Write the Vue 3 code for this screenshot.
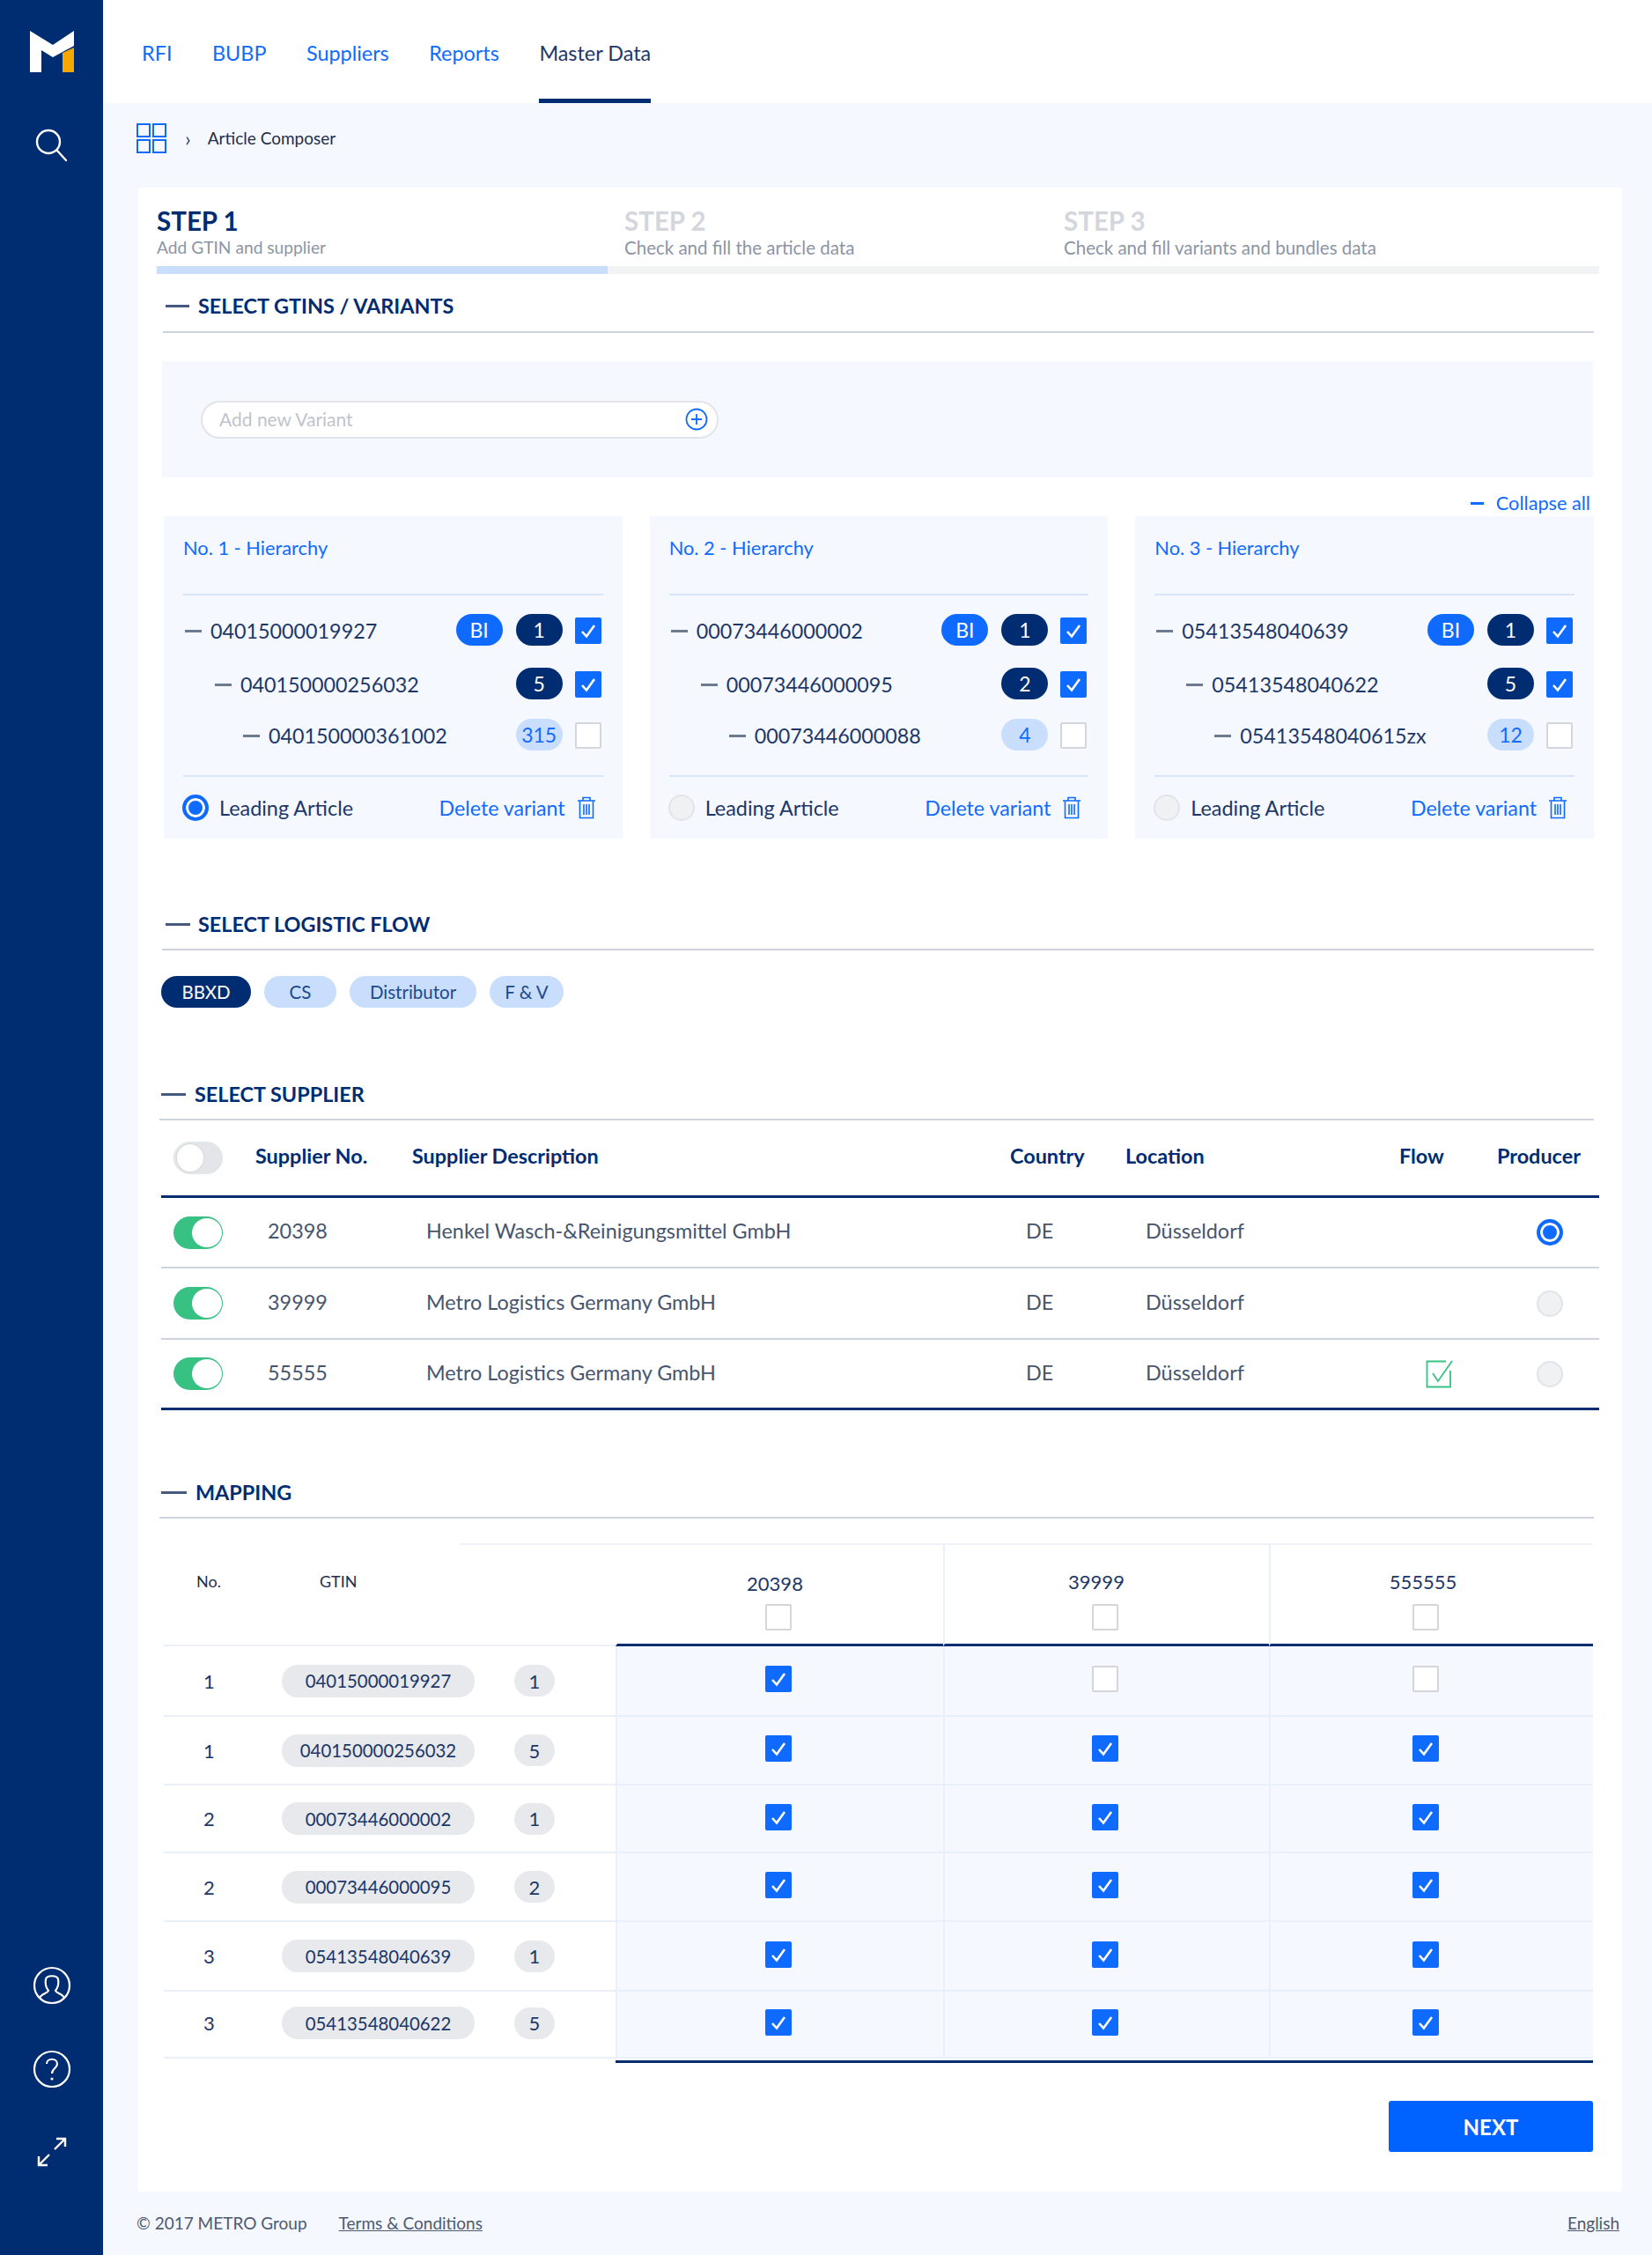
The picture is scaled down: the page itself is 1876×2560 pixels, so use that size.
<script setup>
const cards = [
  { no: 1, rows: [['04015000019927','1','d'],['040150000256032','5','d'],['040150000361002','315','l']], leading: true },
  { no: 2, rows: [['00073446000002','1','d'],['00073446000095','2','d'],['00073446000088','4','l']], leading: false },
  { no: 3, rows: [['05413548040639','1','d'],['05413548040622','5','d'],['05413548040615zx','12','l']], leading: false }
]
const nav = ['RFI', 'BUBP', 'Suppliers', 'Reports', 'Master Data']
const pills = ['BBXD', 'CS', 'Distributor', 'F & V']
const suppliers = [
  { no: '20398', name: 'Henkel Wasch-&Reinigungsmittel GmbH', flow: false, producer: true },
  { no: '39999', name: 'Metro Logistics Germany GmbH', flow: false, producer: false },
  { no: '55555', name: 'Metro Logistics Germany GmbH', flow: true, producer: false }
]
const mapHead = ['20398', '39999', '555555']
const mapRows = [
  { no: 1, gtin: '04015000019927', n: 1, c: [true, false, false] },
  { no: 1, gtin: '040150000256032', n: 5, c: [true, true, true] },
  { no: 2, gtin: '00073446000002', n: 1, c: [true, true, true] },
  { no: 2, gtin: '00073446000095', n: 2, c: [true, true, true] },
  { no: 3, gtin: '05413548040639', n: 1, c: [true, true, true] },
  { no: 3, gtin: '05413548040622', n: 5, c: [true, true, true] }
]
</script>

<template>
  <div class="shell">
    <aside class="side">
      <svg class="logo" viewBox="0 0 50 47" width="50" height="47">
        <path d="M0 0 L26 16 L50 0 V17 L37 24 L26 30 L13 22 V47 H0 Z" fill="#fff" />
        <path d="M37 25 L50 19 V47 H37 Z" fill="#f5a800" />
      </svg>
      <svg class="ic-search" viewBox="0 0 40 40" width="40" height="40" fill="none" stroke="#fff" stroke-width="2.4">
        <circle cx="17" cy="17" r="13" />
        <path d="M26.500 26.500 L37 38" stroke-linecap="round" />
      </svg>
      <div class="side-fill"></div>
      <svg class="ic-user" viewBox="0 0 44 44" width="44" height="44" fill="none" stroke="#fff" stroke-width="2.2">
        <circle cx="22" cy="22" r="20" />
        <path d="M8 36 C10 31 17 31 18 28 C15 24 14 20 15 15 C16 10 28 10 29 15 C30 20 29 24 26 28 C27 31 34 31 36 36" />
      </svg>
      <svg class="ic-help" viewBox="0 0 44 44" width="44" height="44" fill="none" stroke="#fff" stroke-width="2.2">
        <circle cx="22" cy="22" r="20" />
        <path d="M16 16 C16 9 28 9 28 16 C28 21 22 21 22 27" />
        <circle cx="22" cy="33" r="1.600" fill="#fff" stroke="none" />
      </svg>
      <svg class="ic-exp" viewBox="0 0 36 34" width="36" height="34" fill="none" stroke="#fff" stroke-width="2.400">
        <path d="M21 14 L33 2 M23 2 H33 V11" />
        <path d="M15 20 L3 32 M3 22 V32 H13" />
      </svg>
    </aside>

    <div class="main">
      <header class="top">
        <a v-for="n in nav" :key="n" class="nav" :class="{ on: n === 'Master Data' }">{{ n }}</a>
      </header>

      <div class="crumb">
        <svg class="ic-grid" viewBox="0 0 34 34" width="34" height="34" fill="none" stroke="#0f6bff" stroke-width="2">
          <rect x="1" y="1" width="14" height="14" />
          <rect x="19" y="1" width="14" height="14" />
          <rect x="1" y="19" width="14" height="14" />
          <rect x="19" y="19" width="14" height="14" />
        </svg>
        <span class="chev">›</span>
        <span class="crumb-t">Article Composer</span>
      </div>

      <section class="card">
        <div class="steps">
          <div class="step s1"><div class="st-t">STEP 1</div><div class="st-s">Add GTIN and supplier</div></div>
          <div class="step s2"><div class="st-t">STEP 2</div><div class="st-s">Check and fill the article data</div></div>
          <div class="step s3"><div class="st-t">STEP 3</div><div class="st-s">Check and fill variants and bundles data</div></div>
        </div>

        <div class="head h-gtin"><i class="dash"></i>SELECT GTINS / VARIANTS</div>

        <div class="addpanel">
          <div class="addinput">
            <span>Add new Variant</span>
            <svg viewBox="0 0 26 26" width="26" height="26" fill="none" stroke="#0f6bff" stroke-width="1.800">
              <circle cx="13" cy="13" r="11.500" />
              <path d="M13 7 V19 M7 13 H19" />
            </svg>
          </div>
        </div>

        <div class="collapse"><i></i>Collapse all</div>

        <div class="vcards">
          <div v-for="c in cards" :key="c.no" class="vcard">
            <div class="v-title">No. {{ c.no }} - Hierarchy</div>
            <div class="v-list">
              <div v-for="(r, i) in c.rows" :key="r[0]" class="v-row" :class="'lv' + i">
                <i class="vdash"></i>
                <span class="v-code">{{ r[0] }}</span>
                <span class="v-right">
                  <b v-if="i === 0" class="bdg bi">BI</b>
                  <b class="bdg" :class="r[2] === 'd' ? 'dk' : 'lt'">{{ r[1] }}</b>
                  <span class="chk" :class="{ off: r[2] === 'l' }">
                    <svg v-if="r[2] === 'd'" viewBox="0 0 30 30" width="30" height="30" fill="none" stroke="#fff" stroke-width="2.600"><path d="M8 16 L13 21.500 L22 9" /></svg>
                  </span>
                </span>
              </div>
            </div>
            <div class="v-foot">
              <span class="radio" :class="{ sel: c.leading }"></span>
              <span class="lead">Leading Article</span>
              <span class="del">Delete variant</span>
              <svg class="trash" viewBox="0 0 22 26" width="22" height="26" fill="none" stroke="#0f6bff" stroke-width="1.600">
                <path d="M1 5 H21 M7 5 V1.500 H15 V5 M3.500 5 V24.500 H18.500 V5 M8 9 V21 M11 9 V21 M14 9 V21" />
              </svg>
            </div>
          </div>
        </div>

        <div class="head h-flow"><i class="dash"></i>SELECT LOGISTIC FLOW</div>
        <div class="pills">
          <span v-for="(p, i) in pills" :key="p" class="pill" :class="{ act: i === 0 }">{{ p }}</span>
        </div>

        <div class="head h-sup"><i class="dash"></i>SELECT SUPPLIER</div>
        <div class="stable">
          <div class="s-row s-head">
            <div class="c-tog"><span class="tog off"></span></div>
            <div>Supplier No.</div>
            <div>Supplier Description</div>
            <div>Country</div>
            <div>Location</div>
            <div>Flow</div>
            <div>Producer</div>
          </div>
          <div v-for="s in suppliers" :key="s.no" class="s-row s-body">
            <div class="c-tog"><span class="tog"></span></div>
            <div class="b-no">{{ s.no }}</div>
            <div class="b-desc">{{ s.name }}</div>
            <div class="b-de">DE</div>
            <div class="b-loc">Düsseldorf</div>
            <div class="b-flow">
              <svg v-if="s.flow" viewBox="0 0 32 32" width="32" height="32" fill="none" stroke="#37c183" stroke-width="1.800">
                <path d="M28 12 V30.500 H1.500 V1.500 H23" />
                <path d="M8 15 L14 24 L30 1" />
              </svg>
            </div>
            <div class="b-prod"><span class="radio" :class="{ sel: s.producer }"></span></div>
          </div>
        </div>

        <div class="head h-map"><i class="dash"></i>MAPPING</div>
        <div class="map">
          <div class="map-top"></div>
          <div class="m-row m-head">
            <div class="m-left">
              <span class="mh-no">No.</span>
              <span class="mh-gtin">GTIN</span>
            </div>
            <div v-for="(h, i) in mapHead" :key="h" class="mh-col" :class="'col' + i">
              <span class="mh-lab">{{ h }}</span>
              <span class="chk off"></span>
            </div>
          </div>
          <div v-for="r in mapRows" :key="r.gtin" class="m-row m-body">
            <div class="m-left">
              <span class="m-no">{{ r.no }}</span>
              <span class="m-gtin">{{ r.gtin }}</span>
              <span class="m-n">{{ r.n }}</span>
            </div>
            <div v-for="(v, i) in r.c" :key="i" class="m-cell" :class="'col' + i">
              <span class="chk" :class="{ off: !v }">
                <svg v-if="v" viewBox="0 0 30 30" width="30" height="30" fill="none" stroke="#fff" stroke-width="2.600"><path d="M8 16 L13 21.500 L22 9" /></svg>
              </span>
            </div>
          </div>
          <div class="map-end"></div>
        </div>

        <div class="actions"><button class="next">NEXT</button></div>
      </section>

      <footer class="foot">
        <span>© 2017 METRO Group</span>
        <a class="terms">Terms &amp; Conditions</a>
        <a class="lang">English</a>
      </footer>
    </div>
  </div>
</template>

<style scoped>
.shell { display: flex; width: 1876px; min-height: 2560px; font-family: Lato, "Open Sans", sans-serif; background: #f5f8fe; color: #1c3768; }
.side { width: 117px; flex: none; background: #002d72; display: flex; flex-direction: column; align-items: center; }
.logo { margin-top: 35px; margin-left: 0; }
.ic-search { margin-top: 62px; margin-left: -2px; }
.side-fill { flex: 1; }
.ic-user { margin-bottom: 51px; }
.ic-help { margin-bottom: 55px; }
.ic-exp { margin-bottom: 100px; }

.main { flex: 1; min-width: 0; display: flex; flex-direction: column; }
.top { height: 117px; background: #fff; display: flex; padding-left: 44px; gap: 45.500px; box-sizing: border-box; }
.nav { display: flex; align-items: center; font-size: 23.400px; color: #0f6bff; box-sizing: border-box; padding-top: 7px; border-bottom: 5px solid transparent; }
.nav.on { color: #1c3768; border-bottom-color: #002d72; }

.crumb { height: 96px; box-sizing: border-box; padding: 23px 0 0 38px; display: flex; align-items: flex-start; }
.chev { margin: 3px 0 0 21px; font-size: 24px; line-height: 28px; color: #3d4f6e; }
.crumb-t { margin: 5px 0 0 19px; font-size: 19px; line-height: 24px; color: #1f2f4a; }

.card { margin: 0 34px 0 40px; background: #fff; padding: 0 26px 45px 21px; display: flex; flex-direction: column; }
.steps { display: flex; }
.step { box-sizing: border-box; padding: 21px 0 8px; border-bottom: 9px solid #f2f3f5; }
.s1 { width: 512px; border-bottom-color: #c9defc; }
.s2 { width: 499px; padding-left: 19px; }
.s3 { flex: 1; padding-left: 19px; }
.st-t { font-size: 29.500px; line-height: 34px; font-weight: 700; color: #d3d6dc; }
.s1 .st-t { color: #002d72; }
.st-s { font-size: 20.500px; line-height: 26px; color: #8b95a5; }
.s1 .st-s { font-size: 19.200px; }

.head { display: flex; align-items: center; font-size: 23.400px; line-height: 30px; font-weight: 700; color: #002d72; padding-bottom: 13px; border-bottom: 2px solid #cdd4e0; }
.dash { display: block; height: 3px; background: #46597e; }
.h-gtin { margin: 21px 6px 0 7px; padding-left: 3px; padding-bottom: 14px; }
.h-gtin .dash { width: 27px; margin-right: 10px; }
.h-flow { margin: 82px 6px 0 6px; padding-left: 4px; }
.h-flow .dash { width: 28px; margin-right: 9px; }
.h-sup { margin: 83px 6px 0 3px; padding-left: 2px; }
.h-sup .dash { width: 28px; margin-right: 10px; }
.h-map { margin: 78px 6px 0 3px; padding-left: 2px; }
.h-map .dash { width: 29px; margin-right: 10px; }

.addpanel { margin: 32px 7px 0 6px; height: 132px; background: #f5f8fe; display: flex; align-items: center; padding-left: 44px; }
.addinput { width: 588px; height: 43px; box-sizing: border-box; background: #fff; border: 2px solid #e1e4e9; border-radius: 22px; display: flex; align-items: center; justify-content: space-between; padding: 0 10px 0 19px; font-size: 21px; color: #bfc4cc; }
.addinput span { margin-top: -2px; }

.collapse { height: 44px; box-sizing: border-box; padding: 14px 10px 0 0; display: flex; justify-content: flex-end; align-items: center; font-size: 21.700px; line-height: 28px; color: #0f6bff; }
.collapse i { display: block; width: 15px; height: 3px; background: #0f6bff; margin-right: 14px; }

.vcards { margin: 0 6px 0 8px; display: grid; grid-template-columns: repeat(3, 1fr); gap: 31px; }
.vcard { height: 366px; background: #f5f8fe; padding: 22px 22px 0; box-sizing: border-box; }
.v-title { font-size: 21.800px; line-height: 28px; color: #0f6bff; padding-bottom: 38px; border-bottom: 2px solid #d8e4f7; }
.v-list { padding-bottom: 25px; border-bottom: 2px solid #d8e4f7; }
.v-row { display: flex; align-items: center; height: 40px; margin-top: 21px; }
.v-row.lv0 { padding-left: 2px; margin-top: 20px; }
.v-row.lv1 { padding-left: 36px; }
.v-row.lv2 { padding-left: 68px; margin-top: 18px; }
.vdash { display: block; width: 19px; height: 3px; background: #6d7b90; margin-right: 10px; }
.v-code { font-size: 23.300px; color: #1c3768; }
.v-right { margin-left: auto; display: flex; align-items: center; padding-right: 2px; }
.bdg { display: flex; align-items: center; justify-content: center; width: 53px; height: 36px; border-radius: 18px; font-size: 23px; font-weight: 400; margin-right: 14px; margin-top: -3px; }
.bi { background: #0f6bff; color: #fff; margin-right: 15px; }
.dk { background: #002d72; color: #fff; }
.lt { background: #c9defc; color: #0f6bff; }
.chk { display: block; width: 30px; height: 30px; box-sizing: border-box; background: #0f6bff; border-radius: 2px; flex: none; }
.chk.off { background: #fff; border: 2px solid #d4d6db; }
.chk svg { display: block; }
.v-foot { height: 70px; display: flex; align-items: center; box-sizing: border-box; margin-left: -1px; }
.radio { display: block; width: 30px; height: 30px; box-sizing: border-box; border-radius: 50%; background: #f0f1f3; border: 2px solid #e2e4e8; flex: none; }
.radio.sel { background: #0f6bff; border: 4px solid #0f6bff; box-shadow: inset 0 0 0 3px #fff; }
.lead { margin-left: 12px; font-size: 23.400px; color: #1c3768; }
.del { margin-left: auto; font-size: 23.200px; color: #0f6bff; }
.trash { margin: 0 8px 0 13px; }

.pills { margin: 29px 0 0 5px; display: grid; grid-template-columns: 102px 82px 144px 84px; column-gap: 15px; }
.pill { height: 36px; border-radius: 18px; background: #c9defc; color: #1c4a8c; display: flex; align-items: center; justify-content: center; font-size: 20.500px; }
.pill.act { background: #002d72; color: #fff; }

.stable { margin-left: 5px; }
.s-row { display: grid; grid-template-columns: 107px 178px 679px 131px 311px 111px 1fr; align-items: center; box-sizing: border-box; }
.s-head { height: 88px; border-bottom: 3px solid #002d72; font-size: 23.400px; font-weight: 700; color: #002d72; }
.s-head > div { padding-bottom: 6px; }
.s-head > .c-tog { padding-bottom: 0; }
.s-body { height: 80px; border-bottom: 2px solid #cdd4e0; font-size: 23.400px; color: #47556e; }
.s-body:nth-child(2) { height: 80px; }
.s-body:nth-child(3) { height: 81px; }
.s-body > div { padding-bottom: 4px; }
.s-body:last-child { border-bottom: 3px solid #002d72; }
.s-body > .c-tog, .s-body > .b-flow, .s-body > .b-prod { padding-bottom: 0; }
.c-tog { padding-left: 14px; display: flex; }
.tog { display: block; position: relative; width: 56px; height: 37px; border-radius: 19px; background: #37c183; }
.tog::after { content: ""; position: absolute; right: 1px; top: 2px; width: 34px; height: 33px; border-radius: 50%; background: #fff; }
.tog.off { background: #e3e5e9; border: 1px solid #dfe9e6; box-sizing: border-box; }
.tog.off::after { left: 2px; right: auto; top: 1px; width: 32px; height: 33px; border: 1px solid #d6d8dc; box-sizing: border-box; }
.b-no { padding-left: 14px; }
.b-desc { padding-left: 16px; }
.b-de { padding-left: 18px; }
.b-loc { padding-left: 23px; }
.b-flow { padding-left: 30px; display: flex; }
.b-prod { padding-left: 45px; display: flex; }

.map { margin: 28px 7px 0 8px; }
.map-top { height: 2px; margin-left: 336px; background: #eef2f9; }
.m-row { display: grid; grid-template-columns: 513px 372px 370px 1fr; }
.m-head { height: 115px; }
.m-left { display: flex; align-items: center; border-bottom: 2px solid #eaf0fa; box-sizing: border-box; }
.m-head .m-left { align-items: flex-start; padding-top: 29px; font-size: 18px; line-height: 24px; color: #1f2f4a; position: relative; }
.mh-no { margin-left: 37px; }
.mh-gtin { margin-left: 112px; }
.mh-col { border-left: 2px solid #eaf0fa; border-bottom: 3px solid #002d72; box-sizing: border-box; display: flex; flex-direction: column; align-items: center; padding-top: 28px; }
.mh-col.col0 { border-left-color: transparent; }
.mh-lab { font-size: 22px; line-height: 28px; color: #1c3768; margin-bottom: 11px; }
.mh-col .chk { position: relative; }
.col0 { padding-right: 4px; }
.col1 { padding-right: 4px; }
.col2 { padding-right: 14px; }
.mh-col.col0 .mh-lab { transform: translate(-4px, 2px); }
.mh-col.col1 .mh-lab { transform: translateX(-10px); }
.mh-col.col2 .mh-lab { transform: translateX(-3px); }
.m-body { height: 78px; }
.m-body:nth-child(3) { height: 80px; }
.m-body:nth-child(5) { height: 77px; }
.m-body:nth-child(7) { height: 79px; }
.m-body:nth-child(8) { height: 76px; }
.m-body:nth-child(8) .m-left { padding-bottom: 3px; }
.m-no { width: 103px; text-align: center; font-size: 22px; color: #1c3768; }
.m-gtin { margin-left: 31px; width: 219px; height: 37px; border-radius: 18px; background: #e7e9ed; display: flex; align-items: center; justify-content: center; font-size: 20.400px; color: #1c3768; }
.m-n { margin-left: 45px; width: 46px; height: 36px; border-radius: 18px; background: #e7e9ed; display: flex; align-items: center; justify-content: center; font-size: 22px; color: #1c3768; }
.m-cell { background: #f5f8fe; border-left: 2px solid #eaf0fa; border-bottom: 2px solid #eaf0fa; box-sizing: border-box; display: flex; align-items: center; justify-content: center; padding-bottom: 4px; }
.map-end { height: 3px; margin: 2px 0 0 513px; background: #002d72; }

.actions { display: flex; justify-content: flex-end; margin: 43px 7px 0 0; }
.next { width: 232px; height: 58px; border: 0; border-radius: 3px; background: #0062ff; color: #fff; font: 700 24px Lato, sans-serif; }

.foot { height: 70px; display: flex; align-items: center; padding: 0 37px 0 38px; font-size: 19px; color: #4d5a70; }
.terms { margin-left: 36px; text-decoration: underline; }
.lang { margin-left: auto; text-decoration: underline; }
</style>
